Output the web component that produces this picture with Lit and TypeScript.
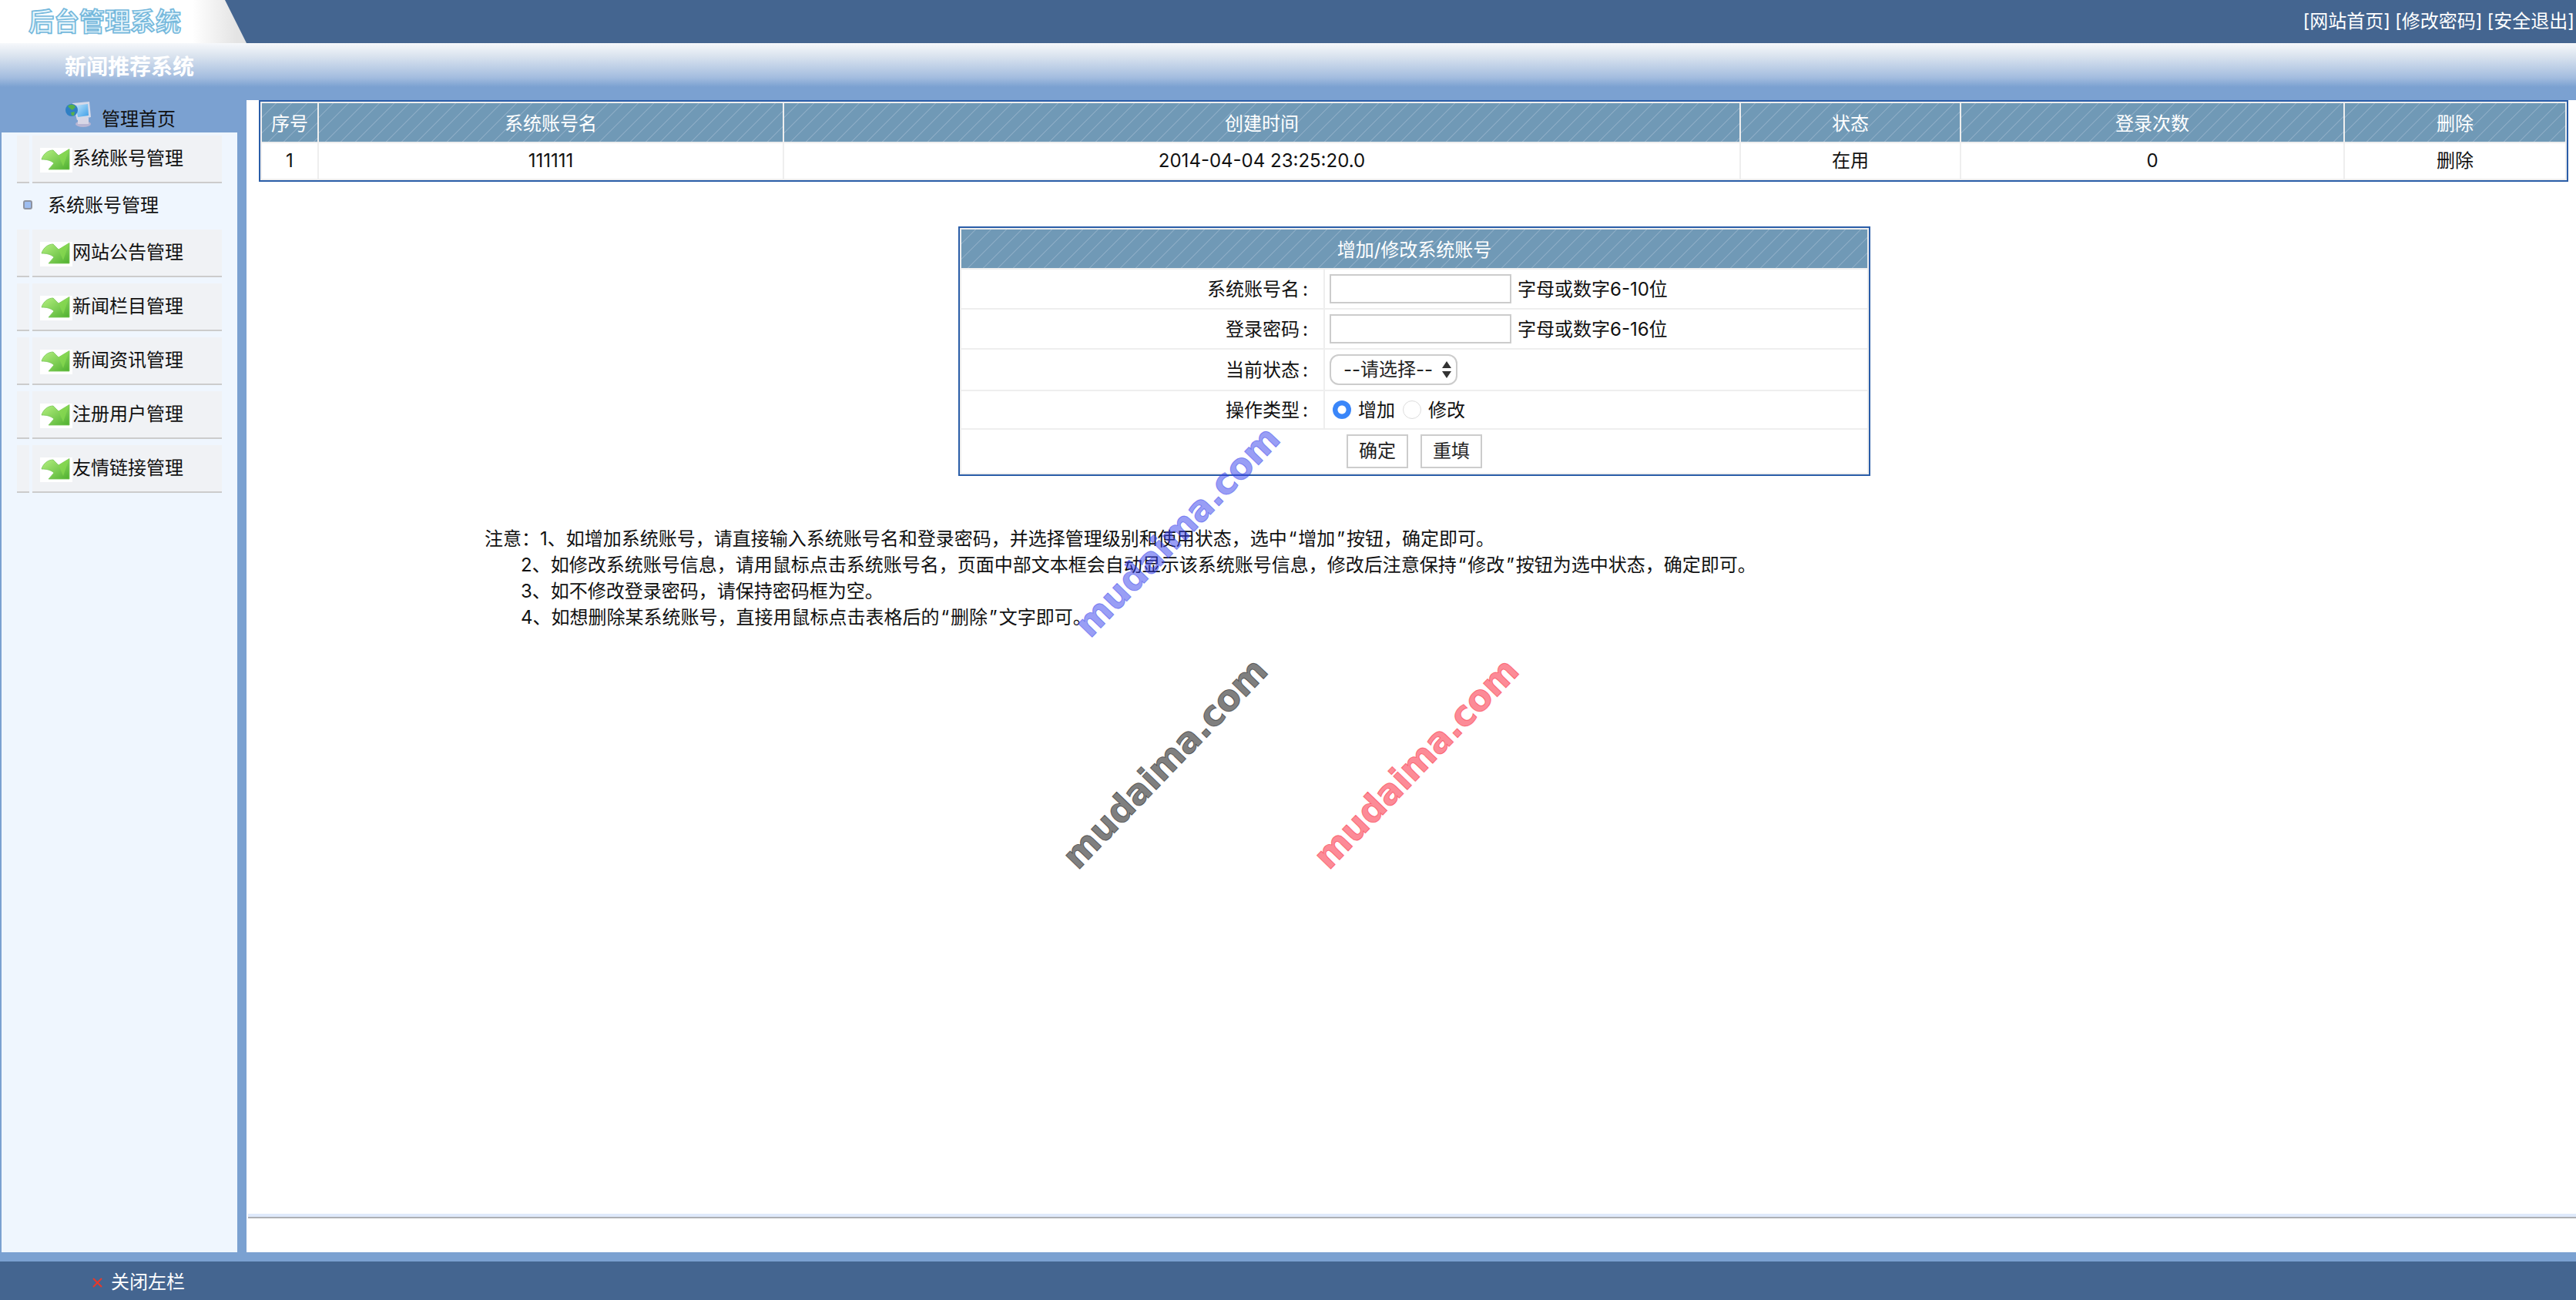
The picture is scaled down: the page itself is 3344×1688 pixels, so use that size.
import { LitElement, html, css, svg } from "lit";
import { customElement } from "lit/decorators.js";

const arrow = svg`<svg class="arrow" viewBox="0 0 42 32" width="42" height="32">
  <defs><linearGradient id="ag" x1="0" y1="0" x2="1" y2="1"><stop offset="0" stop-color="#b8f283"/><stop offset="1" stop-color="#4fb02f"/></linearGradient></defs>
  <path d="M2 15 C4 8 10 3 17 3 L24 10 L38 1.5 L38 28 L11 28 L18 20 C14 16 8 15 2 15 Z" fill="url(#ag)" stroke="#79c858" stroke-width="0.8"/>
  <path d="M24 10 L38 1.5 L30 24 Z" fill="#86d84f" opacity=".75"/>
</svg>`;

const homeIcon = svg`<svg class="home-icon" viewBox="0 0 35 35" width="35" height="35">
  <defs><linearGradient id="sc" x1="0" y1="0" x2="1" y2="1"><stop offset="0" stop-color="#bfe4fb"/><stop offset="1" stop-color="#3e9fe8"/></linearGradient></defs>
  <ellipse cx="23" cy="30" rx="10" ry="4" fill="#b9b6d3"/>
  <rect x="16" y="22" width="14" height="8" fill="#d8d6e6"/>
  <path d="M9 3 L31 1 L33 21 L15 25 Z" fill="#d5d9e8"/>
  <path d="M13 6 L29 4 L30 19 L16 21 Z" fill="url(#sc)"/>
  <circle cx="8" cy="12" r="8" fill="#2f7fc4"/>
  <path d="M3 7 C7 3 12 5 13 8 L9 12 L6 10 Z M7 15 L12 14 L11 19 L8 19 Z" fill="#56b04a"/>
</svg>`;

const menu: { name: string; subs?: string[] }[] = [
  { name: "系统账号管理", subs: ["系统账号管理"] },
  { name: "网站公告管理" },
  { name: "新闻栏目管理" },
  { name: "新闻资讯管理" },
  { name: "注册用户管理" },
  { name: "友情链接管理" },
];

const C = "\uFF0C";
const notes = [
  `注意\uFF1A1、如增加系统账号${C}请直接输入系统账号名和登录密码${C}并选择管理级别和使用状态${C}选中“增加”按钮${C}确定即可。`,
  `2、如修改系统账号信息${C}请用鼠标点击系统账号名${C}页面中部文本框会自动显示该系统账号信息${C}修改后注意保持“修改”按钮为选中状态${C}确定即可。`,
  `3、如不修改登录密码${C}请保持密码框为空。`,
  `4、如想删除某系统账号${C}直接用鼠标点击表格后的“删除”文字即可。`,
];

@customElement("app-root")
export class AppRoot extends LitElement {
  static styles = css`
    :host {
      display: block;
      position: relative;
      width: 3344px;
      height: 1688px;
      overflow: hidden;
      background: #7ba1d1;
      color: #111;
      font: 24px/1.2 Inter, "Noto Sans CJK SC", sans-serif;
    }
    .top {
      height: 56px;
      background: #446590;
      display: flex;
      justify-content: space-between;
      color: #fff;
    }
    .logo {
      width: 320px;
      height: 56px;
      box-sizing: border-box;
      padding-left: 37px;
      line-height: 56px;
      background: linear-gradient(90deg, #fff 78%, #e4e4e4 96%);
      clip-path: polygon(0 0, 292px 0, 320px 100%, 0 100%);
      font-size: 33px;
      font-weight: 700;
      color: #e6f5fb;
      -webkit-text-stroke: 1.6px #74b8dc;
      white-space: nowrap;
    }
    .links {
      display: flex;
      gap: 6px;
      padding-right: 2px;
      line-height: 56px;
    }
    .band {
      height: 74px;
      box-sizing: border-box;
      padding-left: 84px;
      background: linear-gradient(180deg, #f6f8fb 0%, #dbe4ef 22%, #a4bddf 60%, #7ba1d1 77%);
      color: #fff;
      font-size: 28px;
      font-weight: 700;
      line-height: 62px;
    }
    .body {
      height: 1496px;
      display: grid;
      grid-template-columns: 320px 1fr;
    }
    .side {
      display: flex;
      flex-direction: column;
    }
    .side-head {
      height: 42px;
      display: flex;
      padding-left: 85px;
    }
    .home-icon {
      margin-top: 1px;
    }
    .side-head span {
      margin: 10px 0 0 12px;
      line-height: 30px;
    }
    .panel {
      flex: 1;
      margin: 0 12px 0 2px;
      background: #eff6fe;
      padding: 4px 0 0 20px;
    }
    .item {
      display: flex;
      gap: 4px;
      height: 62px;
      width: 266px;
      margin-bottom: 8px;
    }
    .item .stub,
    .item .bar {
      background: #f0f2f5;
      border-bottom: 2px solid #ccc;
      box-sizing: border-box;
    }
    .stub {
      width: 16px;
    }
    .bar {
      width: 246px;
      display: flex;
      padding: 16px 0 0 10px;
      line-height: 28px;
    }
    .arrow {
      background: #fff;
      flex: none;
    }
    .sub {
      height: 60px;
      margin: -8px 0 0 -20px;
      display: flex;
      align-items: center;
      padding-left: 28px;
      gap: 20px;
    }
    .sub span {
      margin-top: -2px;
    }
    .sub i {
      width: 12px;
      height: 12px;
      margin-top: -4px;
      border-radius: 3px;
      box-sizing: border-box;
      border: 2px solid #8e93a0;
      background: #9dbdf0;
    }
    .main {
      background: #fff;
      padding: 0 10px 0 16px;
      display: flex;
      flex-direction: column;
    }
    table {
      border: 2px solid #2a5da8;
      background: #eee;
      border-collapse: separate;
      border-spacing: 2px;
      table-layout: fixed;
    }
    th {
      font-weight: 400;
      color: #fff;
      padding: 5px 0 0;
      box-sizing: border-box;
      background-color: #7099b6;
      background-image: repeating-linear-gradient(135deg, transparent 0 12.5px, #86a8c2 12.5px 14px);
    }
    td {
      background: #fff;
      padding: 0;
      box-sizing: border-box;
    }
    .list {
      width: 2998px;
    }
    .list th {
      height: 50px;
    }
    .list td {
      height: 46px;
      text-align: center;
      padding-top: 1px;
    }
    .form {
      width: 1184px;
      margin: 58px 0 0 908px;
    }
    .form th {
      height: 50px;
    }
    .form td.label {
      text-align: right;
      padding: 2px 20px 0 0;
    }
    .colon {
      padding-left: 4px;
    }
    .r1 td { height: 50px; }
    .r3 td { height: 52px; }
    .r4 td { height: 48px; }
    .r5 td { height: 56px; text-align: center; }
    .val {
      display: flex;
      align-items: center;
      padding-left: 6px;
    }
    .val span.tip {
      margin-top: 2px;
    }
    .val input[type="text"],
    .val input[type="password"] {
      width: 236px;
      height: 38px;
      box-sizing: border-box;
      border: 2px solid #ccc;
      border-radius: 0;
      margin: 0 8px 0 0;
      padding: 0;
      background: #fff;
      outline: none;
    }
    .select {
      position: relative;
      display: block;
      width: 166px;
      height: 40px;
    }
    select {
      appearance: none;
      width: 166px;
      height: 40px;
      box-sizing: border-box;
      border: 2px solid #ccc;
      border-radius: 12px;
      background: #fff;
      margin: 0;
      padding: 0 0 0 16px;
      color: #222;
      font: inherit;
    }
    .carets {
      position: absolute;
      right: 8px;
      top: 9px;
      pointer-events: none;
    }
    .radio {
      appearance: none;
      width: 24px;
      height: 24px;
      margin: 0 9px 0 4px;
      border-radius: 50%;
      box-sizing: border-box;
      border: 1px solid #ddd;
      background: #fff;
      flex: none;
    }
    .radio.on {
      border: 0;
      background: radial-gradient(circle, #fff 0 5px, #3a86f9 6px);
    }
    .radio.second {
      margin-left: 10px;
    }
    button {
      width: 80px;
      height: 44px;
      box-sizing: border-box;
      border: 2px solid #ccc;
      background: #fff;
      border-radius: 0;
      color: #222;
      font: inherit;
      padding: 0;
      margin: 0;
    }
    button + button {
      margin-left: 16px;
    }
    .notes {
      margin: 65px 0 0 293px;
      line-height: 34px;
    }
    .notes div + div {
      margin-left: 47px;
    }
    .q {
      padding: 0 2px;
    }
    .rule {
      margin: auto -10px 44px -14px;
      height: 6px;
      box-sizing: border-box;
      background: #dfeafb;
      border-bottom: 2px solid #aeb0b4;
    }
    .foot {
      margin-top: 12px;
      height: 50px;
      box-sizing: border-box;
      padding: 4px 0 0 120px;
      background: #446590;
      color: #fff;
      display: flex;
      align-items: center;
      gap: 11px;
    }
    .wm {
      position: absolute;
      font: 700 46px/1 "DejaVu Sans", sans-serif;
      -webkit-text-stroke: 1px currentColor;
      letter-spacing: -0.5px;
      white-space: nowrap;
      transform: translate(-50%, -50%) rotate(-46deg);
      pointer-events: none;
    }
    .wm.blue { left: 1528px; top: 690px; color: rgba(52, 62, 236, 0.5); }
    .wm.gray { left: 1512px; top: 991px; color: rgba(0, 0, 0, 0.5); }
    .wm.red { left: 1838px; top: 991px; color: rgba(250, 24, 48, 0.5); }
  `;

  private item(m: { name: string; subs?: string[] }) {
    return html`
      <div class="item">
        <div class="stub"></div>
        <div class="bar">${arrow}<span>${m.name}</span></div>
      </div>
      ${(m.subs ?? []).map((s) => html`<div class="sub"><i></i><span>${s}</span></div>`)}
    `;
  }

  private note(n: string) {
    return html`<div>${n.split(/([“”])/).map((p) => (p === "“" || p === "”" ? html`<span class="q">${p}</span>` : p))}</div>`;
  }

  render() {
    const widths = [72, 602, 1240, 284, 496, 286];
    return html`
      <div class="top">
        <div class="logo">后台管理系统</div>
        <div class="links"><span>[网站首页]</span><span>[修改密码]</span><span>[安全退出]</span></div>
      </div>
      <div class="band">新闻推荐系统</div>
      <div class="body">
        <aside class="side">
          <div class="side-head">${homeIcon}<span>管理首页</span></div>
          <div class="panel">${menu.map((m) => this.item(m))}</div>
        </aside>
        <main class="main">
          <table class="list">
            <colgroup>${widths.map((w) => html`<col style="width:${w}px" />`)}</colgroup>
            <thead>
              <tr><th>序号</th><th>系统账号名</th><th>创建时间</th><th>状态</th><th>登录次数</th><th>删除</th></tr>
            </thead>
            <tbody>
              <tr><td>1</td><td>111111</td><td>2014-04-04 23:25:20.0</td><td>在用</td><td>0</td><td>删除</td></tr>
            </tbody>
          </table>
          <table class="form">
            <colgroup><col style="width:470px" /><col style="width:704px" /></colgroup>
            <thead><tr><th colspan="2">增加/修改系统账号</th></tr></thead>
            <tbody>
              <tr class="r1">
                <td class="label">系统账号名<span class="colon">:</span></td>
                <td><div class="val"><input type="text" /><span class="tip">字母或数字6-10位</span></div></td>
              </tr>
              <tr class="r1">
                <td class="label">登录密码<span class="colon">:</span></td>
                <td><div class="val"><input type="password" /><span class="tip">字母或数字6-16位</span></div></td>
              </tr>
              <tr class="r3">
                <td class="label">当前状态<span class="colon">:</span></td>
                <td>
                  <div class="val">
                    <span class="select">
                      <select><option>--请选择--</option></select>
                      <svg class="carets" width="12" height="22" viewBox="0 0 12 22"><path d="M6 0 L12 9 L0 9 Z M0 13 L12 13 L6 22 Z" fill="#333" /></svg>
                    </span>
                  </div>
                </td>
              </tr>
              <tr class="r4">
                <td class="label">操作类型<span class="colon">:</span></td>
                <td>
                  <div class="val">
                    <input class="radio on" type="radio" name="op" checked /><span class="tip">增加</span>
                    <input class="radio second" type="radio" name="op" /><span class="tip">修改</span>
                  </div>
                </td>
              </tr>
              <tr class="r5"><td colspan="2"><button>确定</button><button>重填</button></td></tr>
            </tbody>
          </table>
          <div class="notes">${notes.map((n) => this.note(n))}</div>
          <div class="rule"></div>
        </main>
      </div>
      <div class="foot">
        <svg width="13" height="13" viewBox="0 0 13 13"><path d="M1 1 L12 12 M12 1 L1 12" stroke="#e8392a" stroke-width="2" fill="none" /></svg>
        <span>关闭左栏</span>
      </div>
      <div class="wm blue">mudaima.com</div>
      <div class="wm gray">mudaima.com</div>
      <div class="wm red">mudaima.com</div>
    `;
  }
}
